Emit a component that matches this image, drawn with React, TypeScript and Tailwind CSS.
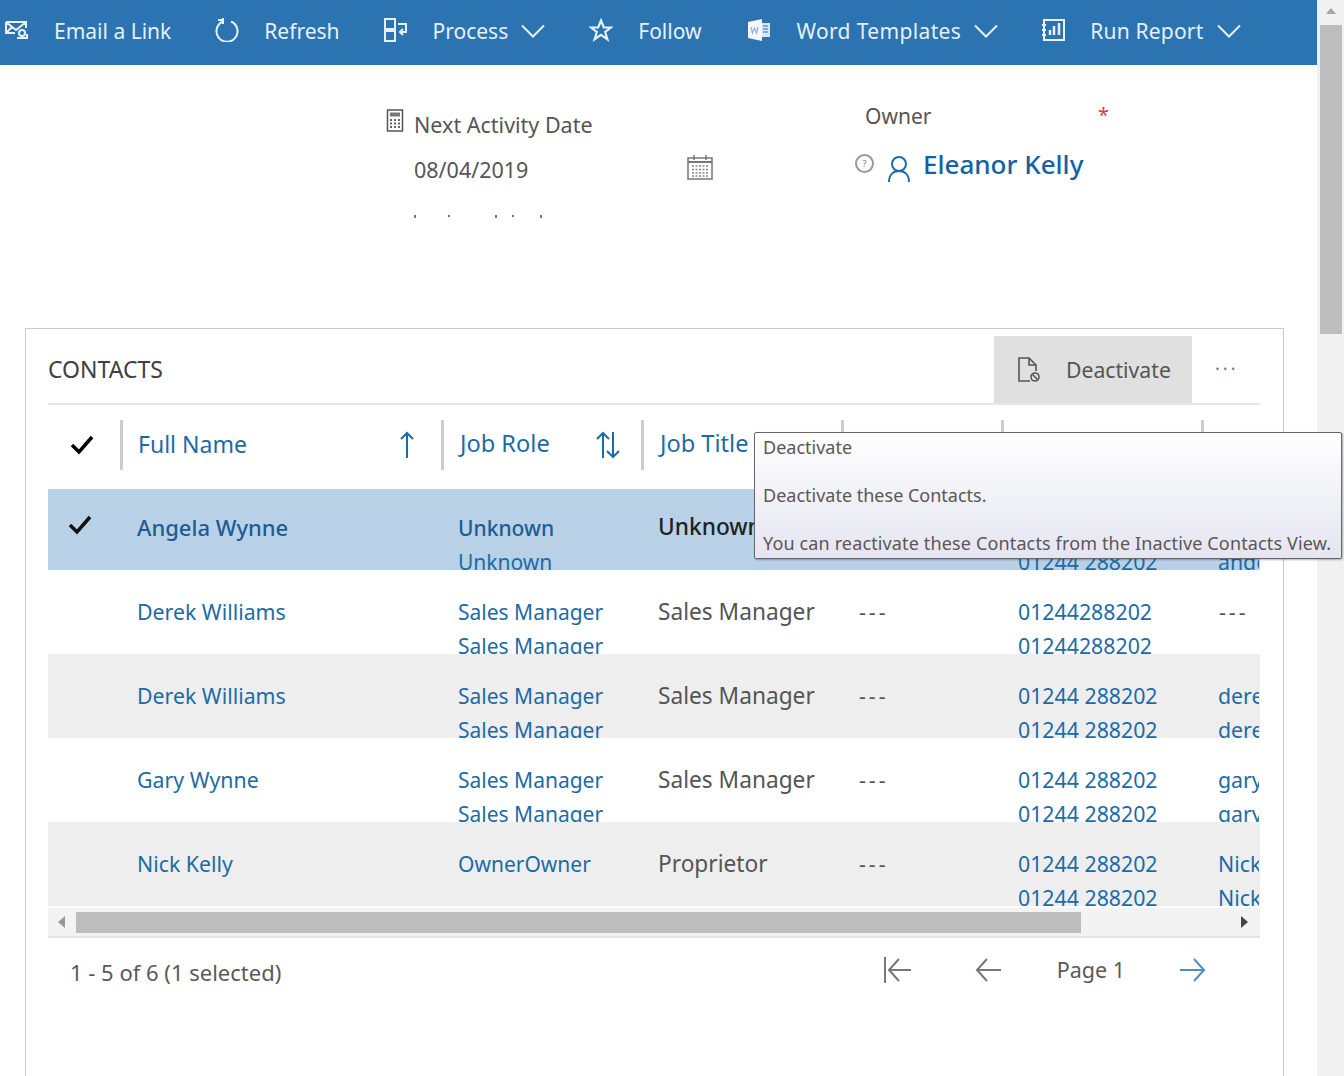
import { ReactNode } from "react";

const font = { fontFamily: '"Noto Sans", "Open Sans", sans-serif' };

const Chevron = () => (
  <svg width="24" height="14" viewBox="0 0 24 14" fill="none" stroke="currentColor" strokeWidth="2" className="mb-[4px] ml-[13px]">
    <path d="M1 1.5 12 12.5 23 1.5" />
  </svg>
);

const EmailIcon = () => (
  <svg width="24" height="20" viewBox="0 0 24 20" fill="none" stroke="#e6f0f8" strokeWidth="2">
    <path d="M1 2h20v6M1 2v11h9M1 2l10 8 10-8M1 13l6-6" />
    <circle cx="17" cy="13" r="3" />
    <path d="M12 18h10v-4" />
  </svg>
);

const RefreshIcon = () => (
  <svg width="24" height="24" viewBox="0 0 24 24" fill="none" stroke="#e6f0f8" strokeWidth="2">
    <path d="M8 3.5a10.5 10.5 0 1 0 8 0" />
    <path d="M8 0v6" />
    <path d="M3 2h5" />
  </svg>
);

const ProcessIcon = () => (
  <svg width="24" height="24" viewBox="0 0 24 24" fill="none" stroke="#e6f0f8" strokeWidth="2">
    <rect x="1" y="1" width="10" height="10" />
    <rect x="1" y="13" width="10" height="10" />
    <path d="M14 6h8v8h-6M19 11l-3 3 3 3" />
  </svg>
);

const StarIcon = () => (
  <svg width="24" height="24" viewBox="0 0 24 24" fill="none" stroke="#e6f0f8" strokeWidth="2.2">
    <path d="M12 2.5 14.8 9.5H22L16.2 14l2.2 7.2L12 16.8l-6.4 4.4L7.8 14 2 9.5h7.2z" />
  </svg>
);

const WordIcon = () => (
  <svg width="24" height="24" viewBox="0 0 24 24">
    <path d="M1 4 15 1v22L1 20z" fill="#f2f7fb" />
    <path d="M15 5h8v14h-8z" fill="#d8e6f2" />
    <path d="M4 9l1.5 6 2-5 2 5L11 9" fill="none" stroke="#8fb6d6" strokeWidth="1.2" />
    <path d="M16 8h5M16 11h5M16 14h5" stroke="#2b74b1" strokeWidth="1" />
  </svg>
);

const ReportIcon = () => (
  <svg width="24" height="24" viewBox="0 0 24 24" fill="none" stroke="#e6f0f8" strokeWidth="2">
    <path d="M3 2h20v20H3z" />
    <path d="M1 7h4M1 12h4M1 17h4" />
    <path d="M9 17v-5M13 17V8M18 17V5" strokeWidth="2.5" />
  </svg>
);

const CalcIcon = () => (
  <svg width="18" height="24" viewBox="0 0 18 24" fill="none">
    <rect x="1.5" y="1" width="15" height="21" stroke="#555" strokeWidth="1.5" />
    <rect x="4" y="3.5" width="10" height="4" fill="#777" />
    <path d="M4 11h2M8 11h2M12 11h2M4 14.5h2M8 14.5h2M12 14.5h2M4 18h2M8 18h2M12 18h2" stroke="#666" strokeWidth="2" />
  </svg>
);

const CalendarIcon = () => (
  <svg className="mb-[4px]" width="26" height="26" viewBox="0 0 26 26" fill="none">
    <rect x="1" y="4" width="24" height="21" stroke="#777" strokeWidth="1.5" />
    <path d="M1 8h24" stroke="#777" strokeWidth="2" />
    <path d="M7 1v5M19 1v5" stroke="#777" strokeWidth="1.5" />
    <path d="M5 12h16M5 15.5h16M5 19h16M5 22h16" stroke="#888" strokeWidth="1.5" strokeDasharray="2 1.5" />
  </svg>
);

const PersonIcon = () => (
  <svg width="24" height="28" viewBox="0 0 24 28" fill="none" stroke="#1c6ba8" strokeWidth="2">
    <circle cx="12" cy="9" r="7" />
    <path d="M2 27c0-7 4-11 10-11s10 4 10 11" />
  </svg>
);

const DeactivateIcon = () => (
  <svg width="24" height="26" viewBox="0 0 24 26" fill="none" stroke="#555" strokeWidth="1.6">
    <path d="M13 24H2V1h10l7 7v6M12 1v7h7" />
    <circle cx="18" cy="20" r="4" />
    <path d="M15.5 17.5 20.5 22.5" />
  </svg>
);

const NavItem = ({
  icon,
  label,
  menu,
  className = "",
}: {
  icon: ReactNode;
  label: string;
  menu?: boolean;
  className?: string;
}) => (
  <div className={`flex items-center ${className}`}>
    <span className="mr-[25px] mb-[5px] flex w-[24px] justify-center">{icon}</span>
    <span className="mb-[2px]">{label}</span>
    {menu && <Chevron />}
  </div>
);

const columns = "grid-cols-[72px_321px_200px_200px_160px_200px_58px]";

type Row = {
  name: string;
  role: string[];
  title: string;
  phone: string[];
  email: string[];
  shaded?: boolean;
};

const rows: Row[] = [
  {
    name: "Derek Williams",
    role: ["Sales Manager", "Sales Manager"],
    title: "Sales Manager",
    phone: ["01244288202", "01244288202"],
    email: ["---"],
  },
  {
    name: "Derek Williams",
    role: ["Sales Manager", "Sales Manager"],
    title: "Sales Manager",
    phone: ["01244 288202", "01244 288202"],
    email: ["derek", "derek"],
    shaded: true,
  },
  {
    name: "Gary Wynne",
    role: ["Sales Manager", "Sales Manager"],
    title: "Sales Manager",
    phone: ["01244 288202", "01244 288202"],
    email: ["gary", "gary"],
  },
  {
    name: "Nick Kelly",
    role: ["OwnerOwner"],
    title: "Proprietor",
    phone: ["01244 288202", "01244 288202"],
    email: ["Nick", "Nick"],
    shaded: true,
  },
];

const Stack = ({ lines, className }: { lines: string[]; className: string }) => (
  <div className={`pl-[17px] ${className}`}>
    {lines.map((line, i) => (
      <div key={i} className="h-[34px] whitespace-nowrap leading-[34px]">
        {line}
      </div>
    ))}
  </div>
);

const HeaderCell = ({ label, icon, wide }: { label?: string; icon?: ReactNode; wide?: boolean }) => (
  <div
    className={`flex h-[50px] items-center justify-between border-l-[3px] border-[#cccccc] pr-[21px] text-[#1c6ba8] ${
      wide ? "pl-[16px] text-[23.6px]" : "pl-[15px] text-[23px]"
    }`}
  >
    <span className="mb-[2px] whitespace-nowrap">{label}</span>
    {icon}
  </div>
);

export default function App() {
  return (
    <div className="flex h-[1076px] w-[1344px] overflow-hidden bg-white text-[22px] text-[#555555]" style={font}>
      <div className="w-[1317px] shrink-0">
        <div className="flex h-[65px] items-center gap-[44px] bg-[#2b74b1] pl-[5px] text-[21px] text-[#e6f0f8]">
          <NavItem icon={<EmailIcon />} label="Email a Link" />
          <NavItem icon={<RefreshIcon />} label="Refresh" />
          <NavItem icon={<ProcessIcon />} label="Process" menu />
          <NavItem icon={<StarIcon />} label="Follow" />
          <NavItem icon={<WordIcon />} label="Word Templates" menu className="ml-[2px] tracking-[0.36px]" />
          <NavItem icon={<ReportIcon />} label="Run Report" menu className="-ml-[1px] tracking-[0.2px]" />
        </div>

        <div className="flex h-[263px] pl-[386px]">
          <div className="w-[479px] pt-[44px]">
            <div className="flex items-start text-[21.5px]">
              <CalcIcon />
              <span className="ml-[10px]">Next Activity Date</span>
            </div>
            <div className="mt-[10px] flex w-[327px] items-center justify-between pl-[28px] text-[21.5px]">
              <span className="mt-[3px]">08/04/2019</span>
              <CalendarIcon />
            </div>
            <div className="mt-[28px] ml-[28px] flex h-[4px] items-start text-[#777777]">
              <span className="h-[3px] w-[2px] bg-current" />
              <span className="ml-[32px] h-[2px] w-[2px] bg-current" />
              <span className="ml-[45px] h-[3px] w-[2px] bg-current" />
              <span className="ml-[15px] h-[2px] w-[2px] bg-current" />
              <span className="ml-[26px] h-[3px] w-[2px] bg-current" />
            </div>
          </div>
          <div className="pt-[36px]">
            <div className="flex w-[244px] items-start justify-between text-[21px]">
              <span>Owner</span>
              <span className="mt-[4px] text-[20px] leading-[20px] text-[#e8333c]">*</span>
            </div>
            <div className="mt-[12px] -ml-[10px] flex items-center">
              <span className="mb-[2px] flex h-[19px] w-[19px] items-center justify-center rounded-full border-2 border-[#999999] text-[9px] leading-none text-[#777777]">
                ?
              </span>
              <span className="mt-[10px] ml-[13px]">
                <PersonIcon />
              </span>
              <span className="ml-[12px] text-[26px] font-medium text-[#1262a3]">Eleanor Kelly</span>
            </div>
          </div>
        </div>

        <div className="ml-[25px] h-[760px] w-[1259px] border border-[#cccccc] pr-[23px] pl-[22px]">
          <div className="flex h-[76px] items-end justify-between border-b-2 border-[#e6e6e6]">
            <span className="mb-[17px] text-[23px] text-[#404040]">CONTACTS</span>
            <div className="flex items-center">
              <div className="flex h-[67px] w-[198px] items-center bg-[#e0e0e0] pl-[23px] text-[21.2px]">
                <DeactivateIcon />
                <span className="ml-[25px]">Deactivate</span>
              </div>
              <span className="mr-[22px] ml-[23px] mb-[2px] w-[23px] text-[18px] tracking-[3px] text-[#777777]">···</span>
            </div>
          </div>

          <div className={`grid ${columns} pt-[15px] pb-[19px]`}>
            <div className="flex items-center justify-center pr-[4px] text-black">
              <svg width="24" height="20" viewBox="0 0 24 20" fill="none" stroke="black" strokeWidth="3.5">
                <path d="M2 10l7 7L22 2" />
              </svg>
            </div>
            <HeaderCell
              label="Full Name"
              icon={
                <svg className="mr-[6px]" width="14" height="28" viewBox="0 0 14 28" fill="none" stroke="#1c6ba8" strokeWidth="2">
                  <path d="M7 27V2M1 8l6-6 6 6" />
                </svg>
              }
            />
            <HeaderCell
              wide
              label="Job Role"
              icon={
                <svg width="24" height="28" viewBox="0 0 24 28" fill="none" stroke="#1c6ba8" strokeWidth="2">
                  <path d="M7 27V2M1 8l6-6 6 6M17 1v25M11 20l6 6 6-6" />
                </svg>
              }
            />
            <HeaderCell wide label="Job Title" />
            <HeaderCell />
            <HeaderCell />
            <HeaderCell />
          </div>

          {/* selected row, its second lines are cut off by the row bottom */}
          <div className={`grid h-[81px] ${columns} overflow-hidden bg-[#b9d1e6] pt-[21px] text-[21.3px] text-[#1c6ba8]`}>
            <div className="flex h-[34px] items-center pl-[20px]">
              <svg className="mb-[4px]" width="24" height="20" viewBox="0 0 24 20" fill="none" stroke="#111111" strokeWidth="3.5">
                <path d="M2 10l7 7L22 2" />
              </svg>
            </div>
            <Stack lines={["Angela Wynne"]} className="text-[22px] font-medium text-[#1c5c94]" />
            <Stack
              lines={["Unknown", "Unknown"]}
              className="mt-[1px] text-[21px] [&>div:first-child]:font-medium [&>div:first-child]:text-[#1c5c94]"
            />
            <Stack lines={["Unknown"]} className="text-[22.7px] font-medium text-[#222222]" />
            <div />
            <Stack lines={["01244 288202", "01244 288202"]} className="mt-[1px]" />
            <Stack lines={["anderson", "anderson"]} className="mt-[1px] overflow-hidden" />
          </div>

          {rows.map((row, i) => (
            <div
              key={i}
              className={`grid h-[84px] ${columns} overflow-hidden pt-[25px] text-[21.3px] ${row.shaded ? "bg-[#eeeeee]" : "bg-white"}`}
            >
              <div />
              <Stack lines={[row.name]} className="text-[#1c6ba8]" />
              <Stack lines={row.role} className="text-[21px] text-[#1c6ba8]" />
              <Stack lines={[row.title]} className="text-[22.7px] text-[#555555]" />
              <Stack lines={["---"]} className="ml-[1px] tracking-[3px] text-[#555555]" />
              <Stack lines={row.phone} className="text-[#1c6ba8]" />
              <Stack
                lines={row.email}
                className={`overflow-hidden ${row.email[0] === "---" ? "ml-[1px] tracking-[3px] text-[#555555]" : "text-[#1c6ba8]"}`}
              />
            </div>
          ))}

          <div className="mt-[2px] flex h-[30px] items-center border-b-2 border-[#e2e2e2] bg-[#f3f3f3]">
            <span className="ml-[10px] h-0 w-0 border-y-[6px] border-r-[7px] border-y-transparent border-r-[#999999]" />
            <div className="ml-[11px] h-[21px] w-[1005px] bg-[#bdbdbd]" />
            <span className="mr-[12px] ml-auto h-0 w-0 border-y-[6px] border-l-[7px] border-y-transparent border-l-[#444444]" />
          </div>

          <div className="flex h-[68px] items-center justify-between pl-[22px] text-[#5a5a5a]">
            <span>1 - 5 of 6 (1 selected)</span>
            <div className="mr-[53px] mb-[4px] flex items-center">
              <svg width="28" height="28" viewBox="0 0 28 28" fill="none" stroke="#777777" strokeWidth="2">
                <path d="M1 1v26M27 14H5M15 3 5 14l10 11" />
              </svg>
              <svg className="ml-[62px]" width="28" height="26" viewBox="0 0 28 26" fill="none" stroke="#777777" strokeWidth="2">
                <path d="M27 13H3M13 2 3 13l10 11" />
              </svg>
              <span className="ml-[55px] text-[21.5px]">Page 1</span>
              <svg className="ml-[54px]" width="28" height="26" viewBox="0 0 28 26" fill="none" stroke="#4a90c8" strokeWidth="2">
                <path d="M1 13h24M15 2l10 11-10 11" />
              </svg>
            </div>
          </div>
        </div>
      </div>

      <div className="flex h-full w-[27px] shrink-0 flex-col items-center bg-[#f1f1f1]">
        <span className="mt-[8px] h-0 w-0 border-x-[5px] border-b-[6px] border-x-transparent border-b-[#a6a6a6]" />
        <div className="mt-[11px] h-[309px] w-[22px] bg-[#bdbdbd]" />
      </div>

      {/* tooltip over the grid */}
      <div className="absolute top-[432px] left-[754px] h-[127px] w-[588px] rounded-[2px] border border-[#666666] bg-gradient-to-b from-white to-[#e4e5f0] pl-[8px] text-[18px] leading-[48px] whitespace-nowrap text-[#5c5656] shadow-[1px_1px_2px_rgba(0,0,0,0.3)]">
        <div className="-mt-[10px] h-[48px]">Deactivate</div>
        <div className="h-[48px]">Deactivate these Contacts.</div>
        <div className="h-[48px] tracking-[0.14px]">You can reactivate these Contacts from the Inactive Contacts View.</div>
      </div>
    </div>
  );
}
